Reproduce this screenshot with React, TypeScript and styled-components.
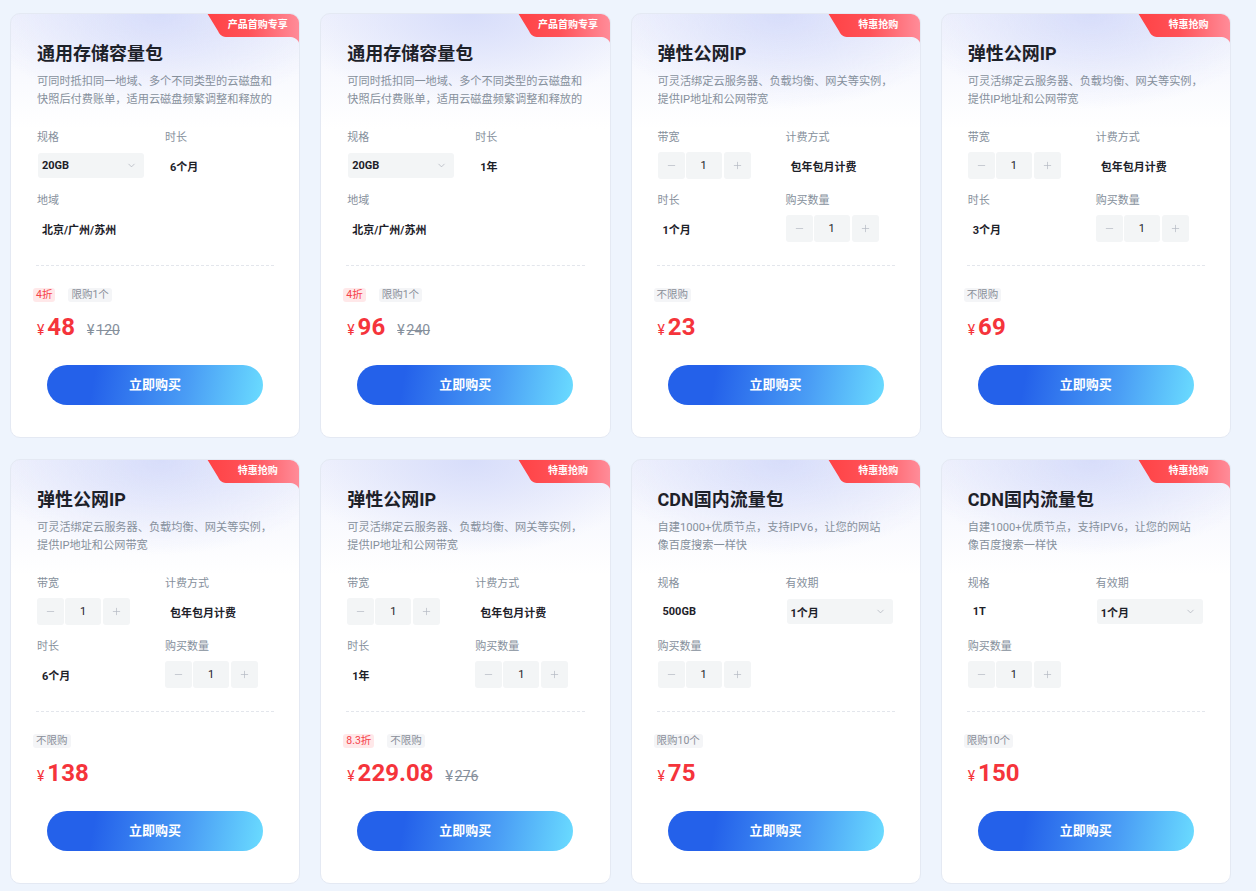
import { FC, useId } from 'react'
import styled, { createGlobalStyle, css } from 'styled-components'
import { ChevronDown, Minus, Plus } from 'lucide-react'

const GlobalStyle = createGlobalStyle`
  body {
    margin: 0;
    background: #eef4fd;
    font-family: Roboto, "Noto Sans CJK SC", sans-serif;
    color: #1d2129;
  }
`

type FieldKind = 'select' | 'text' | 'stepper'
type Field = { label: string; kind: FieldKind; value: string }
type Tag = { text: string; tone: 'red' | 'gray' }
type Product = {
  badge: string
  title: string
  desc: [string, string]
  fields: Field[]
  tags: Tag[]
  price: string
  original?: string
}

const storageDesc: [string, string] = [
  '可同时抵扣同一地域、多个不同类型的云磁盘和',
  '快照后付费账单，适用云磁盘频繁调整和释放的',
]
const ipDesc: [string, string] = ['可灵活绑定云服务器、负载均衡、网关等实例，', '提供IP地址和公网带宽']
const cdnDesc: [string, string] = ['自建1000+优质节点，支持IPV6，让您的网站', '像百度搜索一样快']

const ipFields = (time: string): Field[] => [
  { label: '带宽', kind: 'stepper', value: '1' },
  { label: '计费方式', kind: 'text', value: '包年包月计费' },
  { label: '时长', kind: 'text', value: time },
  { label: '购买数量', kind: 'stepper', value: '1' },
]

const cdnFields = (spec: string): Field[] => [
  { label: '规格', kind: 'text', value: spec },
  { label: '有效期', kind: 'select', value: '1个月' },
  { label: '购买数量', kind: 'stepper', value: '1' },
]

const products: Product[] = [
  {
    badge: '产品首购专享',
    title: '通用存储容量包',
    desc: storageDesc,
    fields: [
      { label: '规格', kind: 'select', value: '20GB' },
      { label: '时长', kind: 'text', value: '6个月' },
      { label: '地域', kind: 'text', value: '北京/广州/苏州' },
    ],
    tags: [{ text: '4折', tone: 'red' }, { text: '限购1个', tone: 'gray' }],
    price: '48',
    original: '120',
  },
  {
    badge: '产品首购专享',
    title: '通用存储容量包',
    desc: storageDesc,
    fields: [
      { label: '规格', kind: 'select', value: '20GB' },
      { label: '时长', kind: 'text', value: '1年' },
      { label: '地域', kind: 'text', value: '北京/广州/苏州' },
    ],
    tags: [{ text: '4折', tone: 'red' }, { text: '限购1个', tone: 'gray' }],
    price: '96',
    original: '240',
  },
  { badge: '特惠抢购', title: '弹性公网IP', desc: ipDesc, fields: ipFields('1个月'), tags: [{ text: '不限购', tone: 'gray' }], price: '23' },
  { badge: '特惠抢购', title: '弹性公网IP', desc: ipDesc, fields: ipFields('3个月'), tags: [{ text: '不限购', tone: 'gray' }], price: '69' },
  { badge: '特惠抢购', title: '弹性公网IP', desc: ipDesc, fields: ipFields('6个月'), tags: [{ text: '不限购', tone: 'gray' }], price: '138' },
  {
    badge: '特惠抢购',
    title: '弹性公网IP',
    desc: ipDesc,
    fields: ipFields('1年'),
    tags: [{ text: '8.3折', tone: 'red' }, { text: '不限购', tone: 'gray' }],
    price: '229.08',
    original: '276',
  },
  { badge: '特惠抢购', title: 'CDN国内流量包', desc: cdnDesc, fields: cdnFields('500GB'), tags: [{ text: '限购10个', tone: 'gray' }], price: '75' },
  { badge: '特惠抢购', title: 'CDN国内流量包', desc: cdnDesc, fields: cdnFields('1T'), tags: [{ text: '限购10个', tone: 'gray' }], price: '150' },
]

const Page = styled.div`
  padding: 13px 25px 6px 10px;
`

const Grid = styled.div`
  display: grid;
  grid-template-columns: repeat(4, 1fr);
  column-gap: 20px;
  row-gap: 21px;
`

const Card = styled.div`
  position: relative;
  overflow: hidden;
  display: flex;
  flex-direction: column;
  padding: 27px 26px 32px;
  border: 1px solid #e4e9f3;
  border-radius: 10px;
  background:
    radial-gradient(ellipse 62% 95px at 52% 0, rgba(214, 220, 250, 0.95) 0%, rgba(255, 255, 255, 0) 100%),
    linear-gradient(180deg, #f1f3fd 0, #ffffff 115px);
`

const Badge = styled.div`
  position: absolute;
  top: -1px;
  right: -1px;
  width: 93px;
  height: 35px;

  svg {
    display: block;
  }
`

const BadgeText = styled.span`
  position: absolute;
  top: 1px;
  left: 18px;
  right: 10px;
  height: 22px;
  line-height: 22px;
  text-align: center;
  color: #fff;
  font-size: 10px;
  font-weight: 700;
  white-space: nowrap;
`

const Title = styled.h3`
  margin: 0;
  font-size: 18px;
  line-height: 26px;
  font-weight: 700;
  color: #1d2129;
`

const Desc = styled.div`
  margin-top: 6px;
  color: #86909c;
  font-size: 11.2px;
  line-height: 18px;
`

const DescLine = styled.div`
  white-space: nowrap;
  overflow: hidden;
`

const Fields = styled.div`
  margin-top: 19px;
  height: 137px;
  display: grid;
  grid-template-columns: 128px 1fr;
  grid-auto-rows: 51px;
  row-gap: 12px;
  align-content: start;
`

const FieldBox = styled.div`
  display: flex;
  flex-direction: column;
  gap: 6px;
`

const Label = styled.div`
  padding-top: 2px;
  font-size: 11px;
  line-height: 16px;
  color: #86909c;
`

const Control = styled.div`
  height: 27px;
  display: flex;
  align-items: center;
`

const Value = styled.span`
  padding-left: 5px;
  font-size: 11px;
  font-weight: 700;
  color: #1d2129;
  white-space: nowrap;
`

const Select = styled.div`
  width: 106px;
  height: 25px;
  margin-left: 1px;
  box-sizing: border-box;
  padding: 0 7px 0 4px;
  display: flex;
  align-items: center;
  justify-content: space-between;
  border-radius: 3px;
  background: #f3f5f6;
  font-size: 11px;
  font-weight: 700;
  color: #1d2129;
`

const Stepper = styled.div`
  display: flex;
  gap: 1px;
`

const StepBtn = styled.div<{ $side: 'left' | 'right' }>`
  width: 27px;
  height: 27px;
  display: flex;
  align-items: center;
  justify-content: center;
  background: #f3f5f6;
  border-radius: 3px;
  color: #b3b8c2;
  ${(p) => p.$side === 'right' && css`margin-left: 1px;`}
`

const StepValue = styled.div`
  width: 36px;
  height: 27px;
  display: flex;
  align-items: center;
  justify-content: center;
  background: #f3f5f6;
  border-radius: 3px;
  font-size: 11px;
  color: #1d2129;
`

const Divider = styled.div`
  margin: 0 -1px;
  border-top: 1px dashed #e3e6ec;
`

const Tags = styled.div`
  margin: 22px 0 0 -4px;
  display: flex;
  gap: 13px;
`

const TagChip = styled.span<{ $tone: 'red' | 'gray' }>`
  height: 14px;
  line-height: 14px;
  padding: 0 3px;
  border-radius: 3px;
  font-size: 10.5px;
  ${(p) =>
    p.$tone === 'red'
      ? css`
          background: #ffe8e9;
          color: #f5424a;
        `
      : css`
          background: #f4f5f7;
          color: #8a8f99;
        `}
`

const PriceRow = styled.div`
  margin-top: 10px;
  height: 30px;
  display: flex;
  align-items: baseline;
  line-height: 30px;
`

const Yen = styled.span`
  font-size: 14px;
  color: #f5343b;
  margin-right: 3px;
`

const Amount = styled.span`
  font-size: 24px;
  font-weight: 700;
  color: #f5343b;
`

const Original = styled.span`
  margin-left: 12px;
  font-size: 14px;
  color: #86909c;
  text-decoration: line-through;
`

const OriginalYen = styled.span`
  margin-right: 2px;
`

const BuyButton = styled.button`
  margin: 23px auto 0;
  width: 216px;
  height: 40px;
  border: none;
  border-radius: 20px;
  background: linear-gradient(100deg, #2461ea 22%, #4a9df5 65%, #6adcff 100%);
  color: #fff;
  font-family: inherit;
  font-size: 13px;
  font-weight: 700;
  line-height: 38px;
  cursor: pointer;
`

const Ribbon: FC<{ text: string }> = ({ text }) => {
  const id = useId()
  return (
    <Badge>
      <svg width="93" height="35" viewBox="0 0 93 35">
        <defs>
          <linearGradient id={id} x1="0" y1="0" x2="1" y2="0">
            <stop offset="0" stopColor="#ff4245" />
            <stop offset="0.45" stopColor="#ff5258" />
            <stop offset="1" stopColor="#ff8d9a" />
          </linearGradient>
        </defs>
        <path d="M0 0 H93 V35 C93 28 89 24 82 24 H21 C15 24 13 22 11 18 Z" fill={`url(#${id})`} />
      </svg>
      <BadgeText>{text}</BadgeText>
    </Badge>
  )
}

const FieldControl: FC<{ field: Field }> = ({ field }) => {
  if (field.kind === 'select') {
    return (
      <Select>
        {field.value}
        <ChevronDown size={11} color="#a9aeb8" strokeWidth={1.5} />
      </Select>
    )
  }
  if (field.kind === 'stepper') {
    return (
      <Stepper>
        <StepBtn $side="left">
          <Minus size={11} strokeWidth={1.5} />
        </StepBtn>
        <StepValue>{field.value}</StepValue>
        <StepBtn $side="right">
          <Plus size={11} strokeWidth={1.5} />
        </StepBtn>
      </Stepper>
    )
  }
  return <Value>{field.value}</Value>
}

const ProductCard: FC<{ item: Product }> = ({ item }) => (
  <Card>
    <Ribbon text={item.badge} />
    <Title>{item.title}</Title>
    <Desc>
      <DescLine>{item.desc[0]}</DescLine>
      <DescLine>{item.desc[1]}</DescLine>
    </Desc>
    <Fields>
      {item.fields.map((f) => (
        <FieldBox key={f.label}>
          <Label>{f.label}</Label>
          <Control>
            <FieldControl field={f} />
          </Control>
        </FieldBox>
      ))}
    </Fields>
    <Divider />
    <Tags>
      {item.tags.map((t) => (
        <TagChip key={t.text} $tone={t.tone}>
          {t.text}
        </TagChip>
      ))}
    </Tags>
    <PriceRow>
      <Yen>¥</Yen>
      <Amount>{item.price}</Amount>
      {item.original && (
        <Original>
          <OriginalYen>¥</OriginalYen>
          {item.original}
        </Original>
      )}
    </PriceRow>
    <BuyButton>立即购买</BuyButton>
  </Card>
)

export default function App() {
  return (
    <>
      <GlobalStyle />
      <Page>
        <Grid>
          {products.map((p, i) => (
            <ProductCard key={i} item={p} />
          ))}
        </Grid>
      </Page>
    </>
  )
}
